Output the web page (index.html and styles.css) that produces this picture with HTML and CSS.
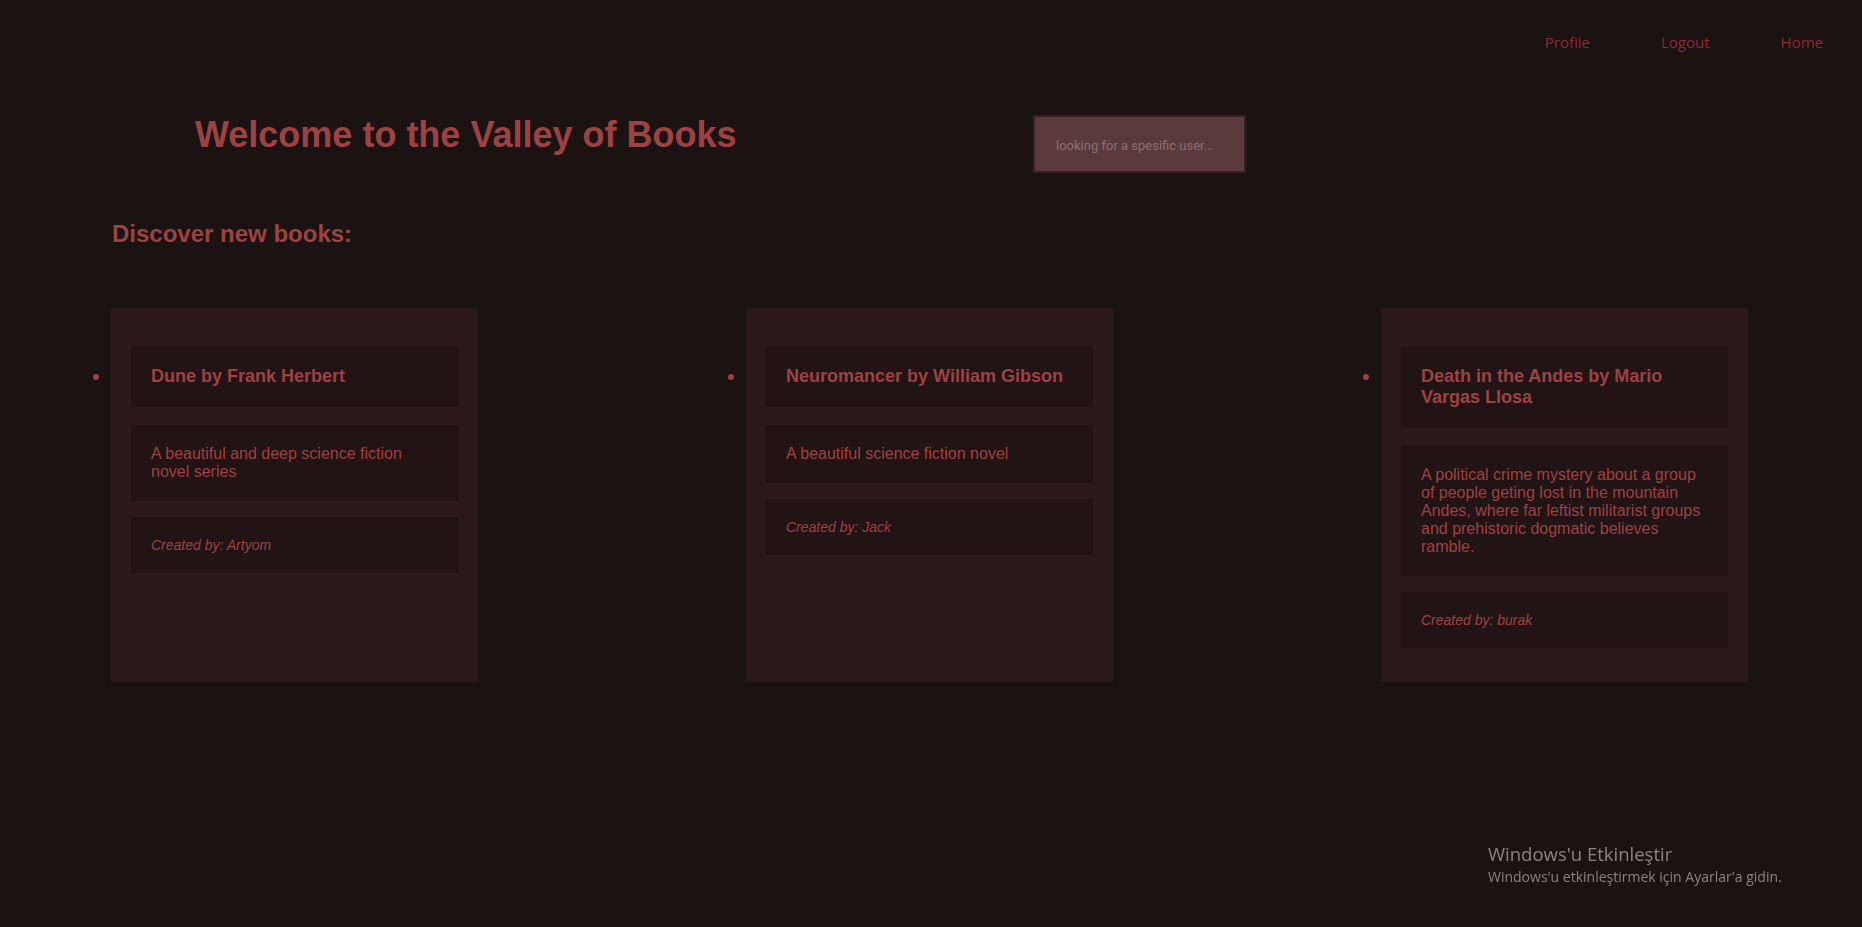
FILE: index.html
```html
<!DOCTYPE html>
<html lang="en">
<head>
<meta charset="utf-8">
<title>Valley of Books</title>
<link rel="stylesheet" href="styles.css">
</head>
<body>
<nav class="topnav">
  <a class="navlink" href="#">Profile</a>
  <a class="navlink" href="#">Logout</a>
  <a class="navlink" href="#">Home</a>
</nav>
<header class="hero">
  <div class="hero-title-wrap">
    <h1 class="hero-title">Welcome to the Valley of Books</h1>
  </div>
  <input class="search" type="text" placeholder="looking for a spesific user...">
</header>
<main class="content">
  <h2 class="section-title">Discover new books:</h2>
  <ul class="book-list">
    <li class="book-card">
      <h3 class="book-title box">Dune by Frank Herbert</h3>
      <p class="book-desc box">A beautiful and deep science fiction novel series</p>
      <p class="book-author box">Created by: Artyom</p>
    </li>
    <li class="book-card">
      <h3 class="book-title box">Neuromancer by William Gibson</h3>
      <p class="book-desc box">A beautiful science fiction novel</p>
      <p class="book-author box">Created by: Jack</p>
    </li>
    <li class="book-card">
      <h3 class="book-title box">Death in the Andes by Mario Vargas Llosa</h3>
      <p class="book-desc box">A political crime mystery about a group of people geting lost in the mountain Andes, where far leftist militarist groups and prehistoric dogmatic believes ramble.</p>
      <p class="book-author box">Created by: burak</p>
    </li>
  </ul>
</main>
<div class="watermark">
  <div class="wm-title">Windows'u Etkinleştir</div>
  <div class="wm-sub">Windows'u etkinleştirmek için Ayarlar'a gidin.</div>
</div>
</body>
</html>
```

FILE: styles.css
```css
html, body {
  margin: 0;
  padding: 0;
}
body {
  background: #1b1212;
  font-family: "Liberation Sans", Arial, sans-serif;
  color: #9d4242;
  min-height: 927px;
}
.topnav {
  display: flex;
  justify-content: flex-end;
  gap: 71px;
  padding: 32px 39px 0 0;
  height: 20px;
}
.navlink {
  font-family: "Open Sans", "Noto Sans", sans-serif;
  font-size: 15px;
  line-height: 20px;
  color: #8c2a2e;
  text-decoration: none;
}
.hero {
  display: flex;
  align-items: flex-start;
  padding-left: 195px;
  margin-top: 62px;
}
.hero-title-wrap {
  flex: 0 0 838px;
}
.hero-title {
  margin: 0;
  font-size: 36px;
  font-weight: bold;
  color: #9d4242;
}
.search {
  box-sizing: border-box;
  width: 213px;
  height: 58px;
  margin-top: 1px;
  background: #5b3a3b;
  border: 2px solid #3b1d20;
  padding: 2px 0 0 21px;
  font-family: Roboto, "Liberation Sans", sans-serif;
  font-size: 13px;
  color: #c9a9a9;
  outline: none;
}
.search::placeholder {
  color: #8c7070;
}
.content {
  padding-left: 112px;
}
.section-title {
  margin: 47px 0 0 0;
  font-size: 24px;
  font-weight: bold;
  color: #9d4242;
}
.book-list {
  display: flex;
  align-items: stretch;
  gap: 268px;
  margin: 60px 0 0 -1px;
  padding: 0;
  list-style: disc outside;
}
.book-card {
  width: 327px;
  padding: 20px;
  background: #2b191a;
  color: #9d4242;
  font-size: 19px;
}
.box {
  background: #221314;
  padding: 20px;
}
.book-title {
  font-size: 18px;
  font-weight: bold;
  margin: 18px 0;
}
.book-desc {
  font-size: 16px;
  margin: 16px 0;
}
.book-author {
  font-size: 14px;
  font-style: italic;
  margin: 14px 0;
}
.watermark {
  position: fixed;
  left: 1488px;
  top: 841px;
  font-family: "Open Sans", "Noto Sans", sans-serif;
  color: #8a8385;
}
.wm-title {
  font-size: 18.5px;
  line-height: 26px;
}
.wm-sub {
  font-size: 14px;
  line-height: 20px;
}
```
